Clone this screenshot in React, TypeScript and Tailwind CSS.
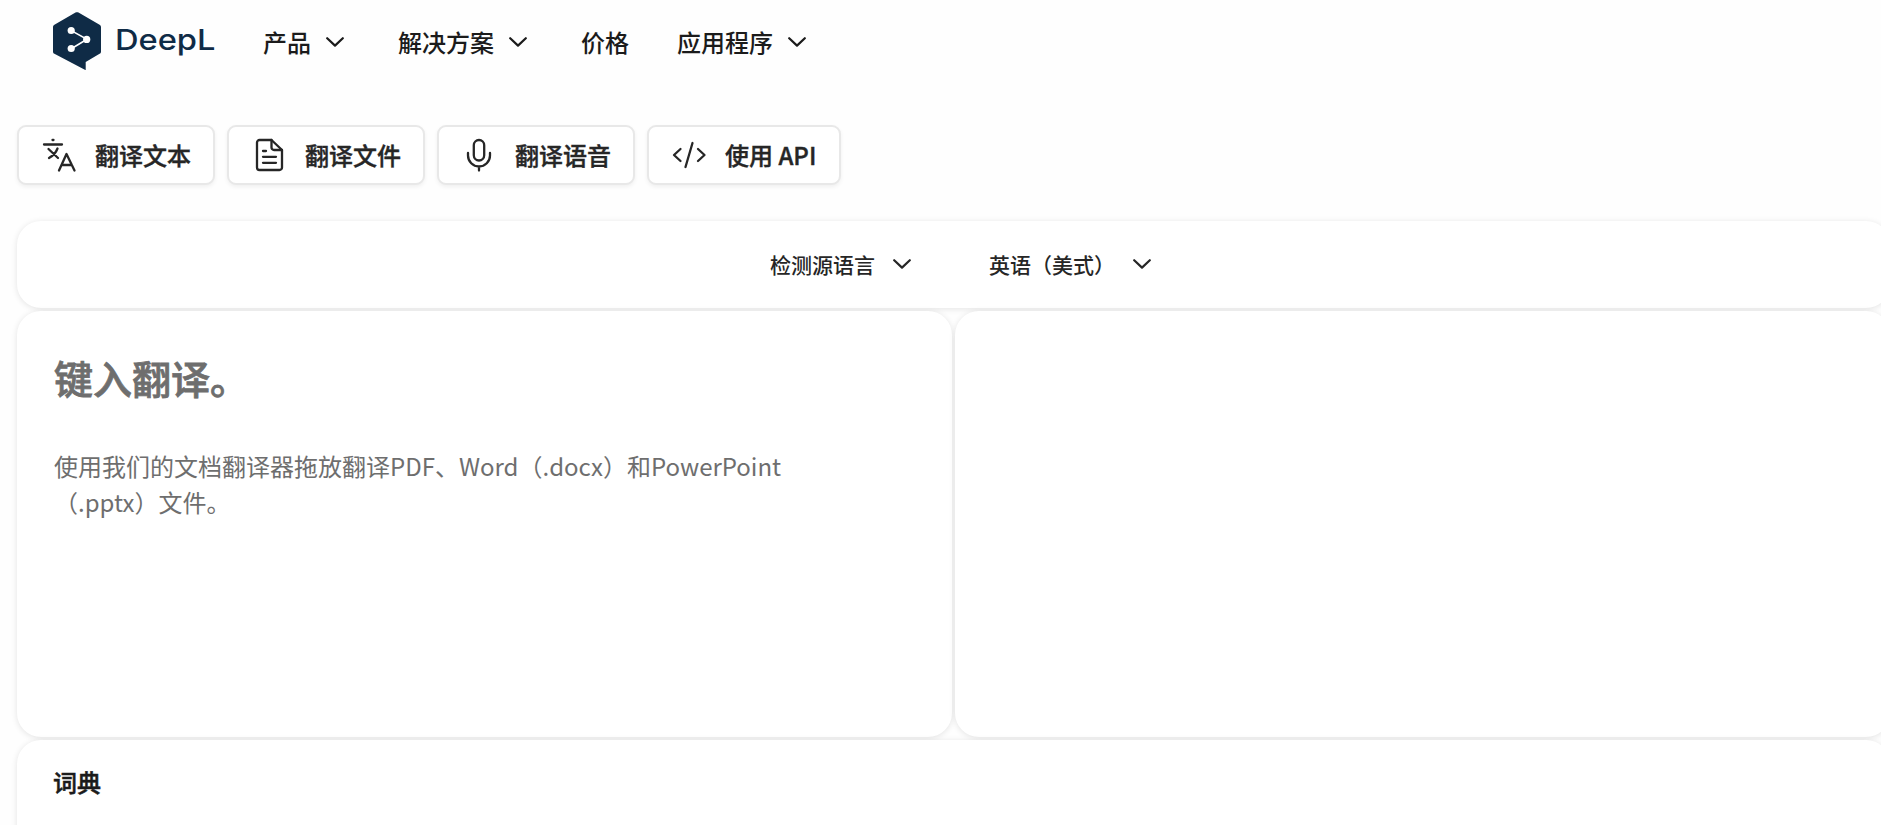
import type { ReactNode } from 'react';

function Chevron({ className = '' }: { className?: string }) {
    return (
        <svg viewBox="0 0 18 10" className={`w-[18px] h-[10px] shrink-0 ${className}`} fill="none" stroke="currentColor" strokeWidth="2.2" strokeLinecap="round" strokeLinejoin="round">
            <path d="M1.2 1.2 9 8.6l7.8-7.4" />
        </svg>
    );
}

function Icon({ children }: { children: ReactNode }) {
    return (
        <svg viewBox="0 0 36 36" className="w-9 h-9 shrink-0" fill="none" stroke="currentColor" strokeWidth="2.3" strokeLinecap="round" strokeLinejoin="round">
            {children}
        </svg>
    );
}

function Logo() {
    return (
        <div className="flex items-start w-[163px] text-[#0f2b46]">
            <svg viewBox="0 0 48 58" className="w-12 h-[58px] shrink-0">
                <path fill="currentColor" d="M0 15.2c0-1.1.5-1.9 1.4-2.4L22.5.6c1-.6 2-.6 3 0l21.1 12.2c.9.5 1.4 1.3 1.4 2.4v24.2c0 1.1-.5 1.9-1.4 2.4L32.7 49.900V58.200L1.400 41.800C.5 41.300 0 40.500 0 39.400z" />
                <path d="M18.300 18.600 34 27.300 18.300 36.700" fill="none" stroke="#fff" strokeWidth="1.600" />
                <circle cx="18.200" cy="18.500" r="3.600" fill="#fff" />
                <circle cx="33.700" cy="27.400" r="3.600" fill="#fff" />
                <circle cx="18.200" cy="36.500" r="3.600" fill="#fff" />
            </svg>
            <svg viewBox="0 0 104 58" className="w-[104px] h-[58px] ml-[12px]">
                <text x="2" y="38" textLength="101.500" lengthAdjust="spacingAndGlyphs" fontSize="29" fontWeight="500" fill="currentColor" className="font-['Inter']">DeepL</text>
            </svg>
        </div>
    );
}

const navItems = [
    { label: '产品', menu: true },
    { label: '解决方案', menu: true },
    { label: '价格', menu: false },
    { label: '应用程序', menu: true },
];

const modes = [
    {
        label: '翻译文本',
        width: 'w-[198px]',
        icon: (
            <>
                <path d="M3 7.500h18M11.500 3h1M7.500 12l9.500 9M16.500 11.500c-1.500 4-4 7-8.500 9.500" />
                <path d="m18 33.500 7.500-16.500L33.500 33.500M20.800 28h10" />
            </>
        ),
    },
    {
        label: '翻译文件',
        width: 'w-[198px]',
        icon: (
            <>
                <path d="M20.500 3H8.500A2.500 2.500 0 0 0 6 5.500v25A2.500 2.500 0 0 0 8.500 33h20a2.500 2.500 0 0 0 2.500-2.500V13z" />
                <path d="M20.500 3v7.500a2.500 2.500 0 0 0 2.500 2.500h8M12 14h3M12 19.800h13M12 25.800h13" />
            </>
        ),
    },
    {
        label: '翻译语音',
        width: 'w-[198px]',
        icon: (
            <>
                <rect x="12.800" y="3" width="10.400" height="20.500" rx="5.200" />
                <path d="M7 16v2.500a11 11 0 0 0 22 0V16M18 29.500V33.500" />
            </>
        ),
    },
    {
        label: '使用 API',
        width: 'w-[194px]',
        icon: <path d="M9.500 12 3 18l6.500 6M27 12l6.500 6-6.500 6M21.500 6 14.500 30" />,
    },
];

const panel = 'bg-white rounded-[24px] shadow-[0_1px_6px_rgba(0,0,0,0.11)]';

export default function App() {
    return (
        <div className="w-full h-[825px] overflow-hidden bg-[#fefefe] text-[#1b1b1b] font-['Noto_Sans_CJK_SC',sans-serif]" lang="zh-CN">
            <header className="flex h-[125px] pl-[53px] pt-3">
                <Logo />
                <nav className="flex gap-12 ml-[47px] h-[60px] items-center text-2xl font-medium whitespace-nowrap">
                    {navItems.map((item) => (
                        <a key={item.label} className="flex items-center">
                            {item.label}
                            {item.menu && <Chevron className="ml-[15px] mr-[6px]" />}
                        </a>
                    ))}
                </nav>
            </header>

            <div className="flex gap-3 pl-[17px] h-[60px]">
                {modes.map((mode) => (
                    <button key={mode.label} className={`${mode.width} shrink-0 flex items-center pl-[22px] pb-px gap-[18px] rounded-[9px] border-2 border-[#e8e8e8] bg-white text-[#262626] text-2xl font-medium [-webkit-text-stroke:0.4px] whitespace-nowrap shadow-[0_2px_4px_rgba(0,0,0,0.06)]`}>
                        <Icon>{mode.icon}</Icon>
                        {mode.label}
                    </button>
                ))}
            </div>

            <main className="w-[1873px] ml-[17px] mt-9 flex flex-col gap-[3px]">
                <div className={`${panel} h-[87px] flex items-center pl-[753px] text-[21px] font-medium text-[#262626] whitespace-nowrap`}>
                    <button className="flex items-center w-[219px] gap-[18px]">
                        检测源语言
                        <Chevron className="mb-0.5" />
                    </button>
                    <button className="flex items-center gap-[18px]">
                        英语（美式）
                        <Chevron className="mb-0.5" />
                    </button>
                </div>

                <div className="grid grid-cols-2 gap-[3px] h-[426px]">
                    <section className={`${panel} pl-[37px] pt-[37px] text-[#6e6e6e]`}>
                        <h1 className="text-[39px] leading-[58px] font-medium [-webkit-text-stroke:0.8px]">键入翻译。</h1>
                        <p className="mt-[42px] w-[760px] text-2xl leading-9">
                            使用我们的文档翻译器拖放翻译PDF、Word（.docx）和PowerPoint
                            <br />
                            （.pptx）文件。
                        </p>
                    </section>
                    <section className={panel} />
                </div>

                <section className={`${panel} h-[120px] pl-9 pt-6`}>
                    <h2 className="text-2xl leading-9 font-medium [-webkit-text-stroke:0.5px]">词典</h2>
                </section>
            </main>
        </div>
    );
}
